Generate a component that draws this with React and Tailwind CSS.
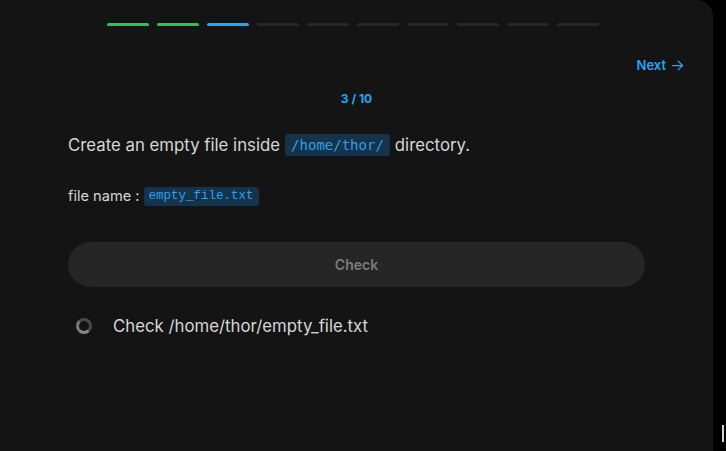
import React from "react";

const steps = ["done", "done", "current", "", "", "", "", "", "", ""];

const App = () => {
  return (
    <div className="w-[726px] h-[451px] bg-black flex overflow-hidden" style={{ fontFamily: "Inter, 'Noto Sans', sans-serif" }}>
      <div className="w-[713px] h-full bg-[#141414] rounded-tr-[16px] flex flex-col">
        {/* progress */}
        <div className="flex justify-center gap-[8px] pt-[23px] pr-[8px]">
          {steps.map((s, i) => (
            <div
              key={i}
              className={
                "w-[42px] h-[3px] rounded-full " +
                (s === "done" ? "bg-[#22c55e]" : s === "current" ? "bg-[#1ea7fd]" : "bg-[#262626]")
              }
            />
          ))}
        </div>

        <div className="flex justify-end pr-[28px] pt-[30px]">
          <button className="flex items-center gap-[4px] text-[13px] font-semibold text-[#1ea7fd]">
            Next
            <svg width="15" height="15" viewBox="0 0 24 24" fill="none" stroke="currentColor" strokeWidth="2" strokeLinecap="round" strokeLinejoin="round">
              <path d="M4 12h16" />
              <path d="m13 5 7 7-7 7" />
            </svg>
          </button>
        </div>

        <div className="text-center text-[12px] font-bold text-[#1ea7fd] mt-[14px]">3 / 10</div>

        <div className="px-[68px]">
          <p className="mt-[25px] text-[16.8px] text-[#d6d6d6] flex items-center">
            Create an empty file inside
            <code className="mx-[5px] px-[6px] h-[22px] flex items-center rounded-[3px] bg-[#15334a] text-[#2ea1e8] text-[14px]" style={{ fontFamily: "'DejaVu Sans Mono', monospace" }}>/home/thor/</code>
            directory.
          </p>

          <p className="mt-[28px] text-[14.6px] text-[#d6d6d6] flex items-center">
            file name :
            <code className="ml-[4px] px-[5px] h-[19px] flex items-center rounded-[3px] bg-[#15334a] text-[#2ea1e8] text-[12.5px]" style={{ fontFamily: "'Liberation Mono', monospace" }}>empty_file.txt</code>
          </p>

          <button className="mt-[34px] w-full h-[45px] rounded-full bg-[#262626] text-[#7c7c7c] text-[14px] font-semibold">
            Check
          </button>

          <div className="mt-[27px] flex items-center gap-[21px] pl-[8px]">
            <div className="w-[16px] h-[16px] rounded-full border-[3px] border-[#4a4a4a] border-b-[#8a8a8a] border-l-[#7a7a7a]" />
            <span className="text-[16.8px] text-[#d6d6d6]">Check /home/thor/empty_file.txt</span>
          </div>
        </div>
      </div>
      <div className="flex-1 relative">
        <div className="absolute left-[9px] top-[425px] w-[2px] h-[17px] bg-[#d0d0d0]" />
      </div>
    </div>
  );
};

export default App;
